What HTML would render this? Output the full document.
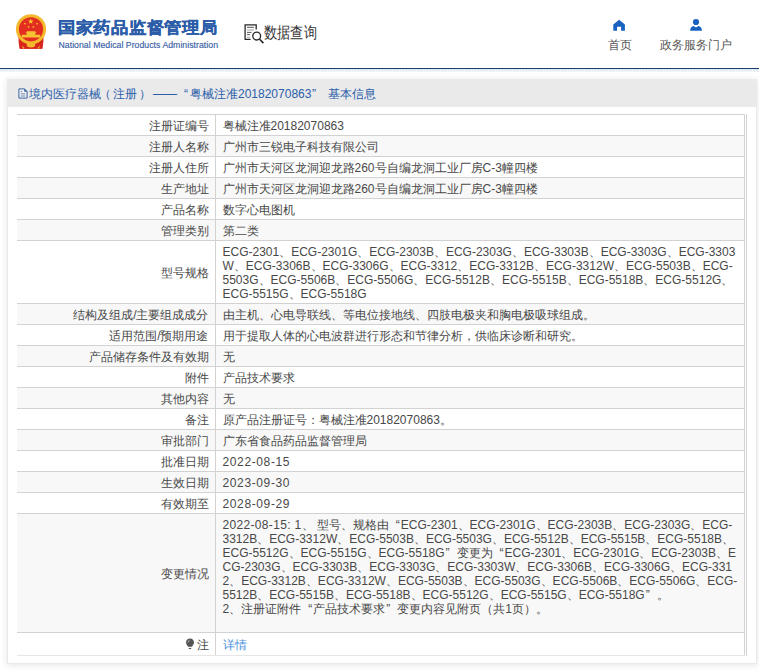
<!DOCTYPE html>
<html><head><meta charset="utf-8">
<style>
*{box-sizing:border-box}
html,body{margin:0;padding:0;background:#fff;width:759px;height:671px;overflow:hidden;font-family:"Liberation Sans",sans-serif;color:#484848}
.abs{position:absolute}
#hline{position:absolute;left:0;top:68px;width:759px;height:1px;background:#1c416f}
#hdash{position:absolute;left:0;top:70px;width:759px;height:1px;background:repeating-linear-gradient(90deg,#e0e7ee 0 2px,#fff 2px 3px)}
#hdash2{position:absolute;left:1px;top:71px;width:758px;height:1px;background:repeating-linear-gradient(90deg,#e9eef3 0 2px,#fff 2px 3px)}
#hl2{position:absolute;left:0;top:69px;width:759px;height:1px;background:#dcecf6}
#title{position:absolute;left:58px;top:18px;font-size:18px;-webkit-text-stroke:0.3px #2b5ca8;line-height:22px;font-weight:900;transform-origin:0 0;transform:scale(0.985,0.91);color:#2b5ca8;white-space:nowrap}
#etitle{position:absolute;left:58.5px;top:39px;font-size:8.7px;line-height:12px;color:#3a5ea5;white-space:nowrap;letter-spacing:0.04px;-webkit-text-stroke:0.15px #3a5ea5}
#sjcx{position:absolute;left:264px;top:22.5px;font-size:16px;line-height:20px;color:#333;white-space:nowrap;transform-origin:0 0;transform:scaleX(0.825)}
.nav{position:absolute;font-size:12px;color:#555;white-space:nowrap}
#panel{position:absolute;left:7px;top:79px;width:750px;height:585px;background:#fff;border:1px solid #e9e9e9;border-top:0;box-shadow:0 1px 7px rgba(0,0,0,.11)}
#ph{position:absolute;left:0;top:0;width:750px;height:28px;background:#eaeaea}
.pt{position:absolute;top:7.5px;font-size:12px;line-height:14px;color:#2a60ab;white-space:nowrap}
table{position:absolute;left:10px;top:35px;width:728px;table-layout:fixed;border-collapse:collapse;font-size:12px;line-height:14px}
td{border-top:1px solid #d2d2d2;padding:4px 8px 2px 7px;vertical-align:middle;white-space:nowrap}
td.l{width:198px;text-align:right;border-right:1px solid #d2d2d2;padding-right:6px}
td.v{border-right:1px solid #d2d2d2}
tr:nth-child(even) td{background:#f8f8f8}
.ql{display:inline-block;width:12px;text-align:right;padding-right:1px}
.qr{display:inline-block;width:12px;text-align:left;padding-left:1px}
tr.last td{padding-top:5px;padding-bottom:3px;border-bottom:1px solid #e6e6e6}
#rb{position:absolute;left:739px;top:35px;width:1px;height:542px;background:#d2d2d2}
</style></head><body>
<div id="hline"></div><div id="hl2"></div><div id="hdash"></div><div id="hdash2"></div>
<svg class="abs" style="left:12px;top:10px" width="38" height="42" viewBox="12 10 38 42">
  <path d="M18.6 37 Q18.2 45.5 20.6 48.7 L41.4 48.7 Q43.8 45.5 43.4 37Z" fill="#d8251b"/>
  <circle cx="31" cy="29.3" r="15.1" fill="#f3b82b"/>
  <circle cx="31" cy="29.3" r="12.1" fill="#e22d20"/>
  <polygon points="30.80,18.60 31.52,20.51 33.56,20.60 31.96,21.88 32.50,23.85 30.80,22.72 29.10,23.85 29.64,21.88 28.04,20.60 30.08,20.51" fill="#f8c92c"/><polygon points="24.90,22.35 25.23,23.24 26.18,23.28 25.44,23.88 25.69,24.79 24.90,24.27 24.11,24.79 24.36,23.88 23.62,23.28 24.57,23.24" fill="#f8c92c"/><polygon points="37.00,22.35 37.33,23.24 38.28,23.28 37.54,23.88 37.79,24.79 37.00,24.27 36.21,24.79 36.46,23.88 35.72,23.28 36.67,23.24" fill="#f8c92c"/><polygon points="28.50,25.65 28.83,26.54 29.78,26.58 29.04,27.18 29.29,28.09 28.50,27.57 27.71,28.09 27.96,27.18 27.22,26.58 28.17,26.54" fill="#f8c92c"/><polygon points="33.30,25.65 33.63,26.54 34.58,26.58 33.84,27.18 34.09,28.09 33.30,27.57 32.51,28.09 32.76,27.18 32.02,26.58 32.97,26.54" fill="#f8c92c"/>
  <path d="M25.6 32.8 L27 31.2 H35 L36.4 32.8Z M26.6 32.8 H35.4 V34.8 H26.6Z M21.8 34.8 H40.2 V37.6 H21.8Z" fill="#f5c232"/>
  <path d="M19.2 41.5 Q25 46 31 46 Q37 46 42.8 41.5 L42.6 48.7 H19.4Z" fill="#d8251b"/>
  <ellipse cx="31" cy="45" rx="4.3" ry="2.4" fill="#f3b82b"/>
  <path d="M22 45.2 L24.6 48.2 L23 48.7Z M40 45.2 L37.4 48.2 L39 48.7Z" fill="#f3b82b"/>
</svg>
<div id="title">国家药品监督管理局</div>
<div id="etitle">National Medical Products Administration</div>
<svg class="abs" style="left:240px;top:20px" width="28" height="26" viewBox="240 20 28 26">
  <path d="M250.6 39.4 H245.1 V24.9 H256.2 V29.6" fill="none" stroke="#2a2a2a" stroke-width="1.3"/>
  <path d="M247 27.3 H254 M247 32.4 H251.5 M247 34.6 H250" stroke="#444" stroke-width="0.9"/>
  <path d="M247 30 H254 M247 37.2 H250" stroke="#999" stroke-width="0.9"/>
  <circle cx="256.7" cy="36.1" r="3.9" fill="none" stroke="#2a2a2a" stroke-width="1.35"/>
  <path d="M259.4 39 L263.4 43.1" stroke="#2a2a2a" stroke-width="1.6"/>
</svg>
<div id="sjcx">数据查询</div>
<svg class="abs" style="left:608px;top:14px" width="24" height="20" viewBox="608 14 24 20"><path d="M613.3 24.4 L619.1 19.8 L624.9 24.4 V30.7 H621.1 V26.7 H617 V30.7 H613.3Z" fill="#1a62bf"/></svg>
<div class="nav" style="left:608px;top:37px">首页</div>
<svg class="abs" style="left:684px;top:14px" width="24" height="20" viewBox="684 14 24 20"><circle cx="696" cy="22" r="3.1" fill="#1a62bf"/><path d="M690.1 30.8 Q690.3 26.6 693.6 25.9 L696 27.6 L698.4 25.9 Q701.8 26.6 702 30.8Z" fill="#1a62bf"/></svg>
<div class="nav" style="left:659.5px;top:37px">政务服务门户</div>

<div id="panel"><div id="pin" style="position:absolute;left:-1px;top:0;width:749px;height:584px">
  <div id="ph"></div>
  <svg class="abs" style="left:11px;top:9px" width="10" height="11" viewBox="18 88 10 11"><path d="M18.9 88.9 H24.5 L27.1 91.5 V98.1 H18.9Z" fill="#f4f4f6" stroke="#3d64a3" stroke-width="1"/><path d="M24.2 88.6 L27.4 91.8 H24.2Z" fill="#3d64a3"/><path d="M20.7 91.5 H22.3 M20.7 93.8 H25.3 M20.7 96 H25.3" stroke="#5f7aa6" stroke-width="0.9"/></svg>
  <div class="pt" style="left:22px">境内医疗器械</div>
  <div class="pt" style="left:91.5px">（</div>
  <div class="pt" style="left:106px">注册</div>
  <div class="pt" style="left:132px">）</div>
  <div class="pt" style="left:146px">——</div>
  <div class="pt" style="left:177px">“</div>
  <div class="pt" style="left:183px">粤械注准20182070863</div>
  <div class="pt" style="left:305px">”</div>
  <div class="pt" style="left:321px">基本信息</div>
  <table>
    <tr><td class="l">注册证编号</td><td class="v">粤械注准20182070863</td></tr>
    <tr><td class="l">注册人名称</td><td class="v">广州市三锐电子科技有限公司</td></tr>
    <tr><td class="l">注册人住所</td><td class="v">广州市天河区龙洞迎龙路260号自编龙洞工业厂房C-3幢四楼</td></tr>
    <tr><td class="l">生产地址</td><td class="v">广州市天河区龙洞迎龙路260号自编龙洞工业厂房C-3幢四楼</td></tr>
    <tr><td class="l">产品名称</td><td class="v">数字心电图机</td></tr>
    <tr><td class="l">管理类别</td><td class="v">第二类</td></tr>
    <tr><td class="l">型号规格</td><td class="v">ECG-2301、ECG-2301G、ECG-2303B、ECG-2303G、ECG-3303B、ECG-3303G、ECG-3303<br>W、ECG-3306B、ECG-3306G、ECG-3312、ECG-3312B、ECG-3312W、ECG-5503B、ECG-<br>5503G、ECG-5506B、ECG-5506G、ECG-5512B、ECG-5515B、ECG-5518B、ECG-5512G、<br>ECG-5515G、ECG-5518G</td></tr>
    <tr><td class="l">结构及组成/主要组成成分</td><td class="v">由主机、心电导联线、等电位接地线、四肢电极夹和胸电极吸球组成。</td></tr>
    <tr><td class="l">适用范围/预期用途</td><td class="v">用于提取人体的心电波群进行形态和节律分析，供临床诊断和研究。</td></tr>
    <tr><td class="l">产品储存条件及有效期</td><td class="v">无</td></tr>
    <tr><td class="l">附件</td><td class="v">产品技术要求</td></tr>
    <tr><td class="l">其他内容</td><td class="v">无</td></tr>
    <tr><td class="l">备注</td><td class="v">原产品注册证号：粤械注准20182070863。</td></tr>
    <tr><td class="l">审批部门</td><td class="v">广东省食品药品监督管理局</td></tr>
    <tr><td class="l">批准日期</td><td class="v"><span style="letter-spacing:0.62px">2022-08-15</span></td></tr>
    <tr><td class="l">生效日期</td><td class="v"><span style="letter-spacing:0.62px">2023-09-30</span></td></tr>
    <tr><td class="l">有效期至</td><td class="v"><span style="letter-spacing:0.62px">2028-09-29</span></td></tr>
    <tr><td class="l">变更情况</td><td class="v"><span style="letter-spacing:0.33px">2022-08-15: 1</span>、 型号、规格由<span class="ql">“</span>ECG-2301、ECG-2301G、ECG-2303B、ECG-2303G、ECG-<br>3312B、ECG-3312W、ECG-5503B、ECG-5503G、ECG-5512B、ECG-5515B、ECG-5518B、<br>ECG-5512G、ECG-5515G、ECG-5518G<span class="qr">”</span>变更为<span class="ql">“</span>ECG-2301、ECG-2301G、ECG-2303B、E<br>CG-2303G、ECG-3303B、ECG-3303G、ECG-3303W、ECG-3306B、ECG-3306G、ECG-331<br>2、ECG-3312B、ECG-3312W、ECG-5503B、ECG-5503G、ECG-5506B、ECG-5506G、ECG-<br>5512B、ECG-5515B、ECG-5518B、ECG-5512G、ECG-5515G、ECG-5518G<span class="qr">”</span>。<br>2、注册证附件<span class="ql">“</span>产品技术要求<span class="qr">”</span>变更内容见附页（共1页）。<br>&nbsp;</td></tr>
    <tr class="last"><td class="l"><svg width="10" height="12" viewBox="0 0 10 12" style="vertical-align:-1px;margin-right:2px"><path d="M5 0.5 C7.6 0.5 9 2.3 9 4.5 C9 6.3 7.6 7.3 7 8.8 L3 8.8 C2.4 7.3 1 6.3 1 4.5 C1 2.3 2.4 0.5 5 0.5Z" fill="#555"/><path d="M3.8 10.5 H6.2" stroke="#555" stroke-width="1.2"/><path d="M3 4.5 Q3.2 2.8 4.6 2.2" stroke="#ddd" stroke-width="0.8" fill="none"/></svg>注</td><td class="v" style="color:#4a8fdc">详情</td></tr>
  </table>
  <div id="rb"></div>
</div></div>
</body></html>
